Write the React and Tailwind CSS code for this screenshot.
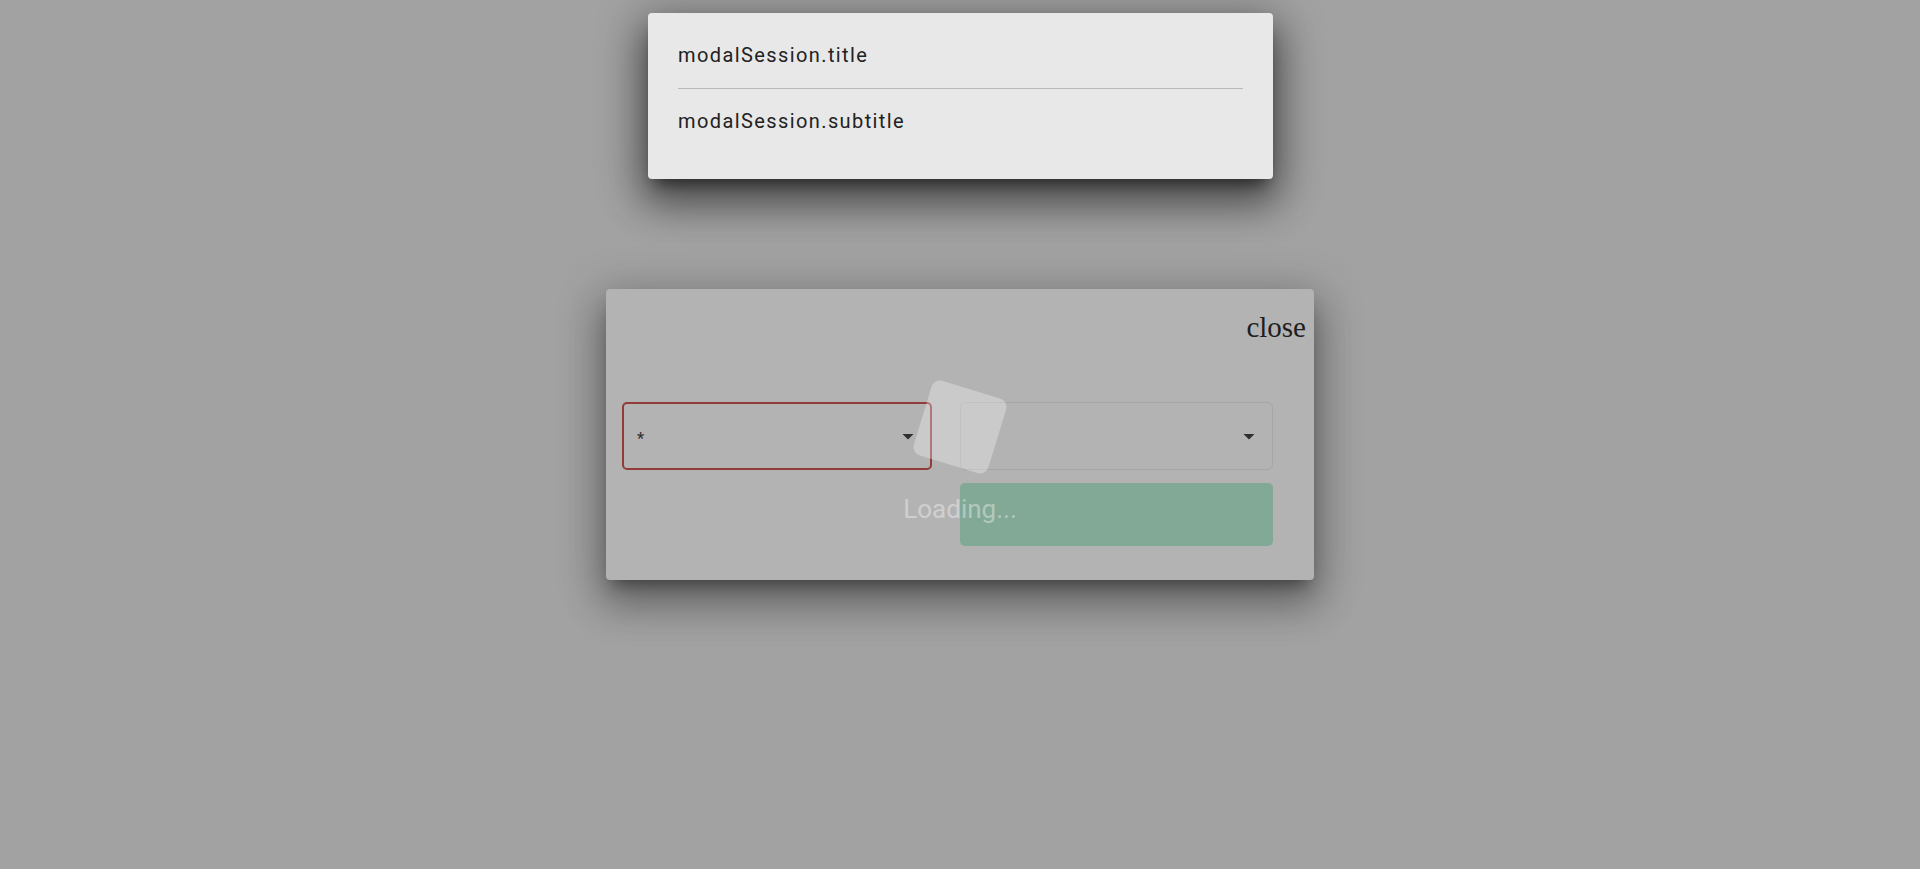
import React from 'react';

const ArrowDrop = () => (
    <svg viewBox="0 0 24 24" className="w-6 h-6 fill-[#2f2f2f]">
        <path d="M6.5 10l5.5 5.5 5.5-5.5z" />
    </svg>
);

const App = () => {
    return (
        <div className="relative w-full h-[869px] bg-[#a2a2a2] overflow-hidden font-['Roboto',sans-serif]">
            {/* Session notice */}
            <div className="flex justify-center pt-[13px] pl-px">
                <div className="w-[625px] h-[166px] bg-[#e8e8e8] rounded-[4px] px-[30px] pt-[30px] shadow-[0_11px_15px_-7px_rgba(0,0,0,0.55),0_24px_38px_3px_rgba(0,0,0,0.35),0_9px_46px_8px_rgba(0,0,0,0.3)]">
                    <p className="text-[20px] leading-[24px] tracking-[1.4px] text-[#222]">modalSession.title</p>
                    <div className="mt-[21px] h-px bg-[#b9b9b9]" />
                    <p className="mt-[20px] text-[20px] leading-[24px] tracking-[1.4px] text-[#222]">modalSession.subtitle</p>
                </div>
            </div>

            {/* Dialog */}
            <div className="flex justify-center pt-[110px]">
                <div className="relative w-[708px] h-[291px] bg-[#b3b3b3] rounded-[4px] shadow-[0_11px_15px_-7px_rgba(0,0,0,0.4),0_24px_38px_3px_rgba(0,0,0,0.25),0_9px_46px_8px_rgba(0,0,0,0.2)]">
                    <div className="flex justify-end pt-[22px] pr-[8px]">
                        <span className="font-['Liberation_Serif',serif] text-[29px] leading-[32px] text-[#1e1e1e]">close</span>
                    </div>
                    <div className="grid grid-cols-[310px_313px] gap-x-[28px] gap-y-[13px] pl-[16px] mt-[59px]">
                        <div className="h-[68px] border-2 border-[#933b3b] rounded-[5px] flex items-center justify-between pl-[13px] pr-[10px]">
                            <span className="text-[16px] font-medium text-[#333] mt-[6px]">*</span>
                            <ArrowDrop />
                        </div>
                        <div className="h-[68px] border border-[#a6a6a6] rounded-[5px] flex items-center justify-end pr-[11px]">
                            <ArrowDrop />
                        </div>
                        <div />
                        <div className="h-[63px] bg-[#82a896] rounded-[5px]" />
                    </div>

                    {/* Loader overlay */}
                    <div className="absolute left-0 right-0 top-[99px] flex flex-col items-center pointer-events-none">
                        <div className="w-[78px] h-[78px] rounded-[9px] bg-white/30 rotate-[17deg]" />
                        <span className="mt-[28px] text-[26px] leading-[30px] text-white/40">Loading...</span>
                    </div>
                </div>
            </div>
        </div>
    );
};

export default App;
